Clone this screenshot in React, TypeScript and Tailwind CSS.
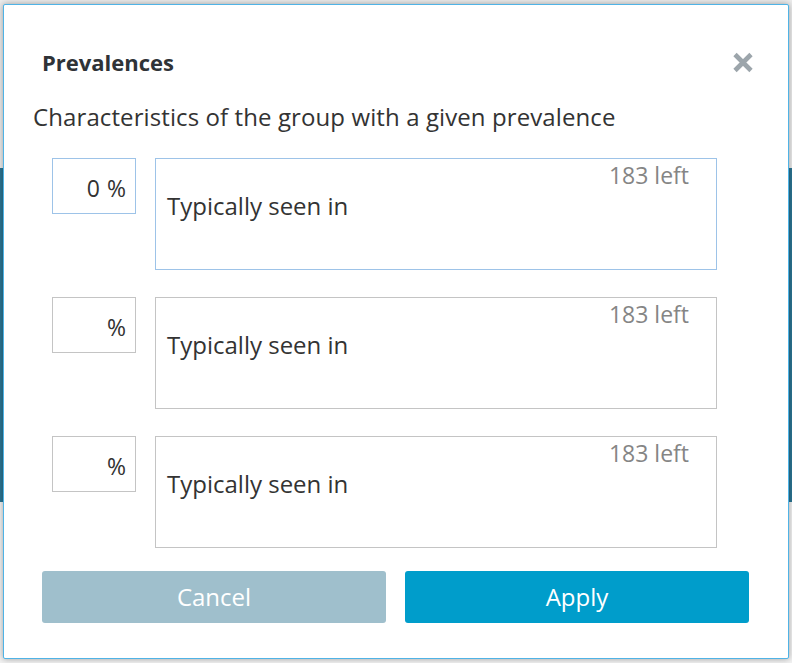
import { useState } from 'react';

const rows = [
  { id: 1, value: '0', focused: true },
  { id: 2, value: '', focused: false },
  { id: 3, value: '', focused: false },
];

function CloseIcon() {
  return (
    <svg width="22" height="21" viewBox="0 0 22 21" aria-hidden="true">
      <path d="M3 2.5 L19 18.5 M19 2.5 L3 18.5" stroke="#9ca5ab" strokeWidth="4.6" strokeLinecap="butt" />
    </svg>
  );
}

function PrevalenceRow({ value, focused }: { value: string; focused: boolean }) {
  return (
    <div className="flex items-start gap-[19px]">
      <div
        className={`w-[84px] h-[56px] border flex items-center justify-end pr-[9px] pt-[4px] text-[23px] leading-[30px] text-[#333] ${
          focused ? 'border-[#9dc3e8]' : 'border-[#c4c4c4]'
        }`}
      >
        {value && <span className="mr-[7px]">{value}</span>}
        <span className="text-[23px]">%</span>
      </div>
      <div
        className={`relative w-[562px] h-[112px] border pl-[11px] pt-[32px] ${
          focused ? 'border-[#9dc3e8]' : 'border-[#c4c4c4]'
        }`}
      >
        <span className="absolute right-[27px] top-[1px] text-[23px] leading-[30px] text-[#858585]">183 left</span>
        <p className="text-[24px] leading-[30px] text-[#333]">Typically seen in</p>
      </div>
    </div>
  );
}

export default function App() {
  const [open] = useState(true);

  return (
    <div className="relative w-[792px] h-[663px] overflow-hidden bg-[#ebebeb]" style={{ fontFamily: '"Open Sans", "Noto Sans", sans-serif' }}>
      <div className="flex flex-col h-full">
        <div className="h-[168px] bg-[#ececec]" />
        <div className="h-[334px] bg-[#2b7593]" />
        <div className="flex-1 bg-[#f2f2f2]" />
      </div>

      {open && (
        <div className="absolute left-[3px] top-[4px] w-[786px] h-[655px] bg-white border border-[#4fb3e6] rounded-[2px] shadow-[0_0_6px_rgba(0,0,0,0.35)]">
          <button className="absolute left-[728px] top-[47px] p-0">
            <CloseIcon />
          </button>

          <h2 className="ml-[38px] mt-[45px] text-[22px] leading-[24px] font-bold text-[#2f3337]">Prevalences</h2>
          <p className="ml-[29px] mt-[29px] text-[24px] leading-[28px] tracking-[0.1px] text-[#333]">
            Characteristics of the group with a given prevalence
          </p>

          <div className="ml-[48px] mt-[27px] flex flex-col gap-[27px]">
            {rows.map((r) => (
              <PrevalenceRow key={r.id} value={r.value} focused={r.focused} />
            ))}
          </div>

          <div className="ml-[38px] mt-[23px] flex gap-[19px]">
            <button className="w-[344px] h-[52px] rounded-[3px] bg-[#9fbfcc] text-white text-[24px]">Cancel</button>
            <button className="w-[344px] h-[52px] rounded-[3px] bg-[#009dcb] text-white text-[24px]">Apply</button>
          </div>
        </div>
      )}
    </div>
  );
}
